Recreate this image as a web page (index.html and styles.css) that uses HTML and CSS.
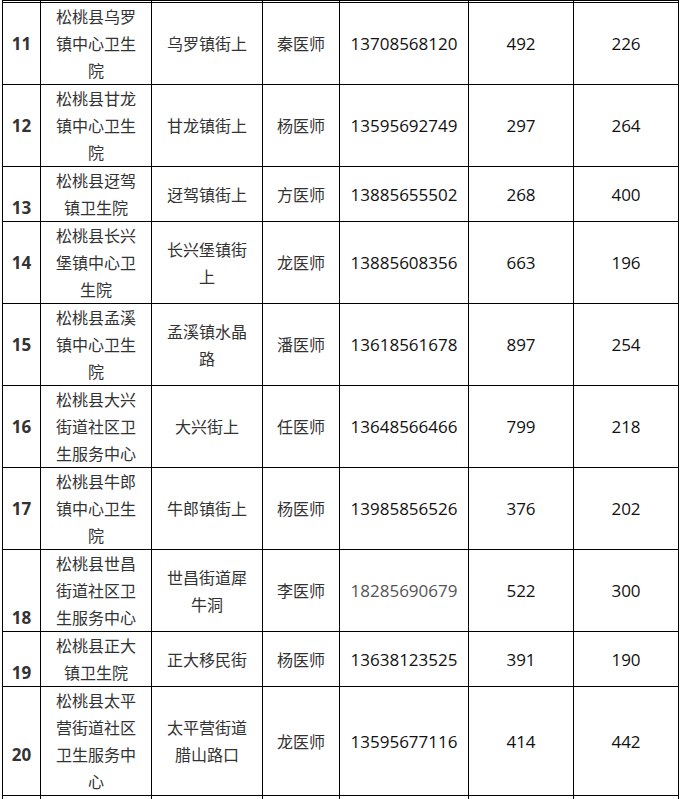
FILE: index.html
```html
<!DOCTYPE html>
<html lang="zh-CN">
<head>
<meta charset="utf-8">
<title>松桃县卫生院</title>
<link rel="stylesheet" href="styles.css">
</head>
<body>
<table class="grid">
  <colgroup>
    <col class="c-no"><col class="c-name"><col class="c-addr"><col class="c-doc"><col class="c-tel"><col class="c-num"><col class="c-num">
  </colgroup>
  <tbody>
    <tr class="cut"><td></td><td></td><td></td><td></td><td></td><td></td><td></td></tr>
    <tr><td class="no">11</td><td>松桃县乌罗镇中心卫生院</td><td>乌罗镇街上</td><td>秦医师</td><td class="num">13708568120</td><td class="num">492</td><td class="num">226</td></tr>
    <tr><td class="no">12</td><td>松桃县甘龙镇中心卫生院</td><td>甘龙镇街上</td><td>杨医师</td><td class="num">13595692749</td><td class="num">297</td><td class="num">264</td></tr>
    <tr><td class="no low">13</td><td>松桃县迓驾镇卫生院</td><td>迓驾镇街上</td><td>方医师</td><td class="num">13885655502</td><td class="num">268</td><td class="num">400</td></tr>
    <tr><td class="no">14</td><td>松桃县长兴堡镇中心卫生院</td><td>长兴堡镇街上</td><td>龙医师</td><td class="num">13885608356</td><td class="num">663</td><td class="num">196</td></tr>
    <tr><td class="no">15</td><td>松桃县孟溪镇中心卫生院</td><td>孟溪镇水晶路</td><td>潘医师</td><td class="num">13618561678</td><td class="num">897</td><td class="num">254</td></tr>
    <tr><td class="no">16</td><td>松桃县大兴街道社区卫生服务中心</td><td>大兴街上</td><td>任医师</td><td class="num">13648566466</td><td class="num">799</td><td class="num">218</td></tr>
    <tr><td class="no">17</td><td>松桃县牛郎镇中心卫生院</td><td>牛郎镇街上</td><td>杨医师</td><td class="num">13985856526</td><td class="num">376</td><td class="num">202</td></tr>
    <tr><td class="no low">18</td><td>松桃县世昌街道社区卫生服务中心</td><td>世昌街道犀牛洞</td><td>李医师</td><td class="num faint">18285690679</td><td class="num">522</td><td class="num">300</td></tr>
    <tr><td class="no low">19</td><td>松桃县正大镇卫生院</td><td>正大移民街</td><td>杨医师</td><td class="num">13638123525</td><td class="num">391</td><td class="num">190</td></tr>
    <tr><td class="no drop">20</td><td>松桃县太平营街道社区卫生服务中心</td><td>太平营街道腊山路口</td><td>龙医师</td><td class="num">13595677116</td><td class="num">414</td><td class="num">442</td></tr>
    <tr class="tail"><td></td><td></td><td></td><td></td><td></td><td></td><td></td></tr>
  </tbody>
</table>
</body>
</html>
```
FILE: styles.css
```css
html, body {
  margin: 0;
  padding: 0;
  background: #ffffff;
}

body {
  font-family: "Noto Sans CJK SC", "Noto Sans", sans-serif;
  font-size: 16px;
  color: #333333;
}

.grid {
  border-collapse: collapse;
  table-layout: fixed;
  width: 677px;
  margin: 0 0 0 2px;
}

.c-no { width: 38px; }
.c-name { width: 111px; }
.c-addr { width: 111px; }
.c-doc { width: 77px; }
.c-tel { width: 129px; }
.c-num { width: 105px; }

.grid td {
  border: 1px solid #000000;
  padding: 0 9px;
  line-height: 27px;
  text-align: center;
  vertical-align: middle;
  word-break: break-all;
}

.grid .cut td {
  height: 1px;
  padding: 0;
  line-height: 1px;
}

.grid .tail td {
  height: 40px;
}

.grid td.no {
  padding: 0;
  font-family: "Open Sans", "Noto Sans", sans-serif;
  font-weight: 700;
  font-size: 17px;
  color: #333333;
}

.grid td.low {
  vertical-align: bottom;
}

.grid td.drop {
  padding-top: 27px;
}

.grid td.num {
  padding: 0;
  font-family: "Open Sans", "Noto Sans", sans-serif;
  font-size: 17px;
  color: #111111;
}

.grid td.faint {
  color: #555555;
}
```
